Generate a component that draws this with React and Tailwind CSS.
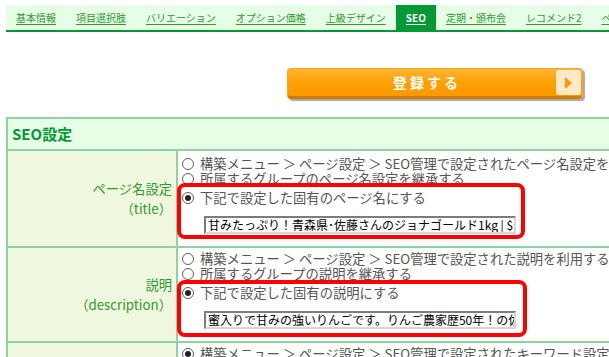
const tabs = [
  "基本情報",
  "項目選択肢",
  "バリエーション",
  "オプション価格",
  "上級デザイン",
  "SEO",
  "定期・頒布会",
  "レコメンド2",
  "ページ設定",
];

function Radio({ checked }) {
  return (
    <span className="flex h-[12px] w-[12px] shrink-0 items-center justify-center rounded-full border border-[#5f5f5f] bg-white">
      {checked && <span className="h-[6px] w-[6px] rounded-full bg-[#222]" />}
    </span>
  );
}

function Choice({ checked, children, className = "" }) {
  return (
    <div className={`flex h-[15px] items-center gap-[6px] whitespace-nowrap ${className}`}>
      <Radio checked={checked} />
      <span>{children}</span>
    </div>
  );
}

function TextBox({ value }) {
  return (
    <div className="ml-[22px] mt-[11px] h-[18px] w-[312px] overflow-hidden whitespace-nowrap border-2 border-t-[#7c7c7c] border-l-[#7c7c7c] border-b-[#d6d6d6] border-r-[#d6d6d6] bg-white pl-[2px] text-[12px] leading-[14px] text-black">
      {value}
    </div>
  );
}

function Row({ label, sub, items, value, top }) {
  return (
    <div className="flex border-b-2 border-[#8fd3a3]">
      <div className="flex w-[170px] shrink-0 flex-col items-end justify-center border-r-2 border-[#8fd3a3] bg-[#eff7de] pr-[4px] text-[13.3px] leading-[20px] text-[#2f9a2f]">
        <span>{label}</span>
        <span>{sub}</span>
      </div>
      <div className={`flex-1 pb-[12px] pl-[4px] text-[13.3px] text-[#555] ${top}`}>
        <Choice>{items[0]}</Choice>
        <Choice>{items[1]}</Choice>
        <Choice checked className="mt-[4px]">
          {items[2]}
        </Choice>
        <TextBox value={value} />
      </div>
    </div>
  );
}

export default function App() {
  return (
    <div className="relative h-[357px] w-[609px] overflow-hidden bg-white font-['Noto_Sans_CJK_JP',sans-serif]">
      {/* tabs */}
      <div className="ml-[6px] mt-[5px] flex h-[27px] w-[720px] border-b-2 border-[#009933] bg-[#e6fde6]">
        {tabs.map((t) => (
          <div
            key={t}
            className={`flex items-center whitespace-nowrap px-[10px] text-[10px] leading-none underline underline-offset-2 ${
              t === "SEO" ? "bg-[#009933] font-bold text-white" : "text-[#2f9a2f]"
            }`}
          >
            {t}
          </div>
        ))}
      </div>

      {/* submit button */}
      <div className="ml-[287px] mt-[36px] flex h-[31px] w-[296px] items-stretch rounded-[4px] border border-[#f5a623] border-b-[3px] border-b-[#d27c00] bg-gradient-to-b from-[#ffb52e] via-[#ffa000] to-[#ff9900] shadow-[2px_2px_1px_#a8a8a8]">
        <div className="flex flex-1 items-center justify-center pl-[10px] text-[14px] font-bold tracking-[0.22em] text-white">
          登録する
        </div>
        <div className="my-[1px] mr-[1px] flex w-[25px] items-center justify-center rounded-[2px] bg-[#ffe9c6]">
          <svg width="8" height="12" viewBox="0 0 8 12">
            <polygon points="0,0 7,6 0,12" fill="#ff9900" />
          </svg>
        </div>
      </div>

      {/* SEO table */}
      <div className="ml-[6px] mt-[18px] w-[720px] border-2 border-[#8fd3a3]">
        <div className="flex h-[32px] items-center border-b-2 border-[#8fd3a3] bg-[#e6fde6] pl-[4px] text-[15px] font-bold text-[#009933]">
          SEO設定
        </div>
        <Row
          label="ページ名設定"
          sub="（title）"
          top="pt-[5px]"
          items={[
            "構築メニュー ＞ ページ設定 ＞ SEO管理で設定されたページ名設定を利用する",
            "所属するグループのページ名設定を継承する",
            "下記で設定した固有のページ名にする",
          ]}
          value="甘みたっぷり！青森県･佐藤さんのジョナゴールド1kg | $shop_name$"
        />
        <Row
          label="説明"
          sub="（description）"
          top="pt-[3px]"
          items={[
            "構築メニュー ＞ ページ設定 ＞ SEO管理で設定された説明を利用する",
            "所属するグループの説明を継承する",
            "下記で設定した固有の説明にする",
          ]}
          value="蜜入りで甘みの強いりんごです。りんご農家歴50年！の佐藤さんが丹精込めて育てました。"
        />
        <div className="flex">
          <div className="h-[60px] w-[170px] shrink-0 border-r-2 border-[#8fd3a3] bg-[#eff7de]" />
          <div className="flex-1 pl-[4px] pt-[3px] text-[13.3px] text-[#555]">
            <Choice checked>構築メニュー ＞ ページ設定 ＞ SEO管理で設定されたキーワード設定を利用する</Choice>
          </div>
        </div>
      </div>

      {/* highlight boxes */}
      <div className="absolute left-[177px] top-[183px] h-[56px] w-[348px] rounded-[8px] border-4 border-[#ff0000]" />
      <div className="absolute left-[177px] top-[280px] h-[57px] w-[350px] rounded-[8px] border-4 border-[#ff0000]" />
    </div>
  );
}
